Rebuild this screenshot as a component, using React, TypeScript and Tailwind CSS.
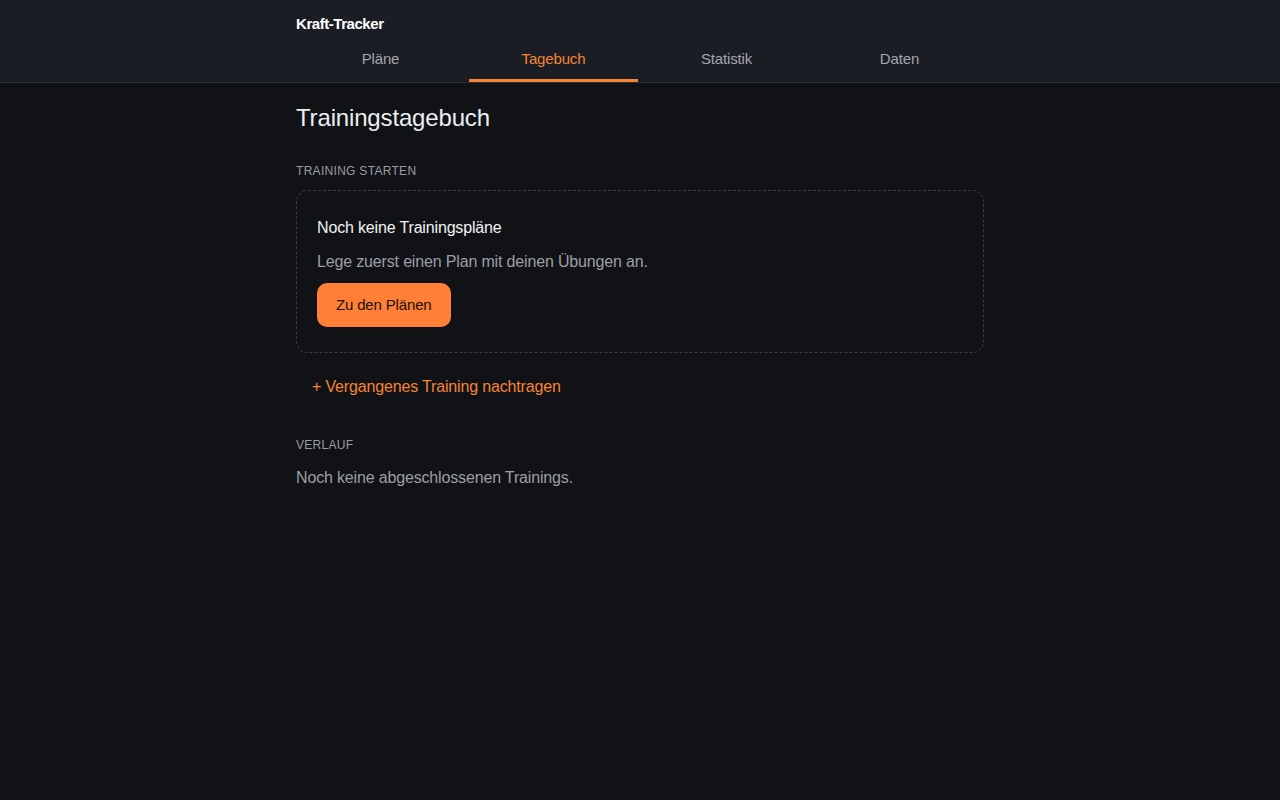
import React from "react";

const tabs = ["Pläne", "Tagebuch", "Statistik", "Daten"];

export default function App() {
  const active = "Tagebuch";
  return (
    <div
      className="min-h-screen bg-[#111216] text-[#e6e7ea]"
      style={{ fontFamily: '"Liberation Sans", Arial, sans-serif' }}
    >
      <header className="bg-[#1a1d24] border-b border-[#2c2f37]">
        <div className="mx-auto max-w-[720px] px-4">
          <div className="pt-[15px] pb-[6px] text-[15px] font-bold tracking-[-0.03em] text-white leading-[18px]">
            Kraft-Tracker
          </div>
          <nav className="grid grid-cols-4 gap-1">
            {tabs.map((t) => (
              <button
                key={t}
                className={
                  t === active
                    ? "h-[43px] text-[15px] tracking-[-0.01em] text-[#f58434] border-b-[3px] border-[#f58434]"
                    : "h-[43px] text-[15px] tracking-[-0.01em] text-[#a3a6ad] border-b-[3px] border-transparent"
                }
              >
                {t}
              </button>
            ))}
          </nav>
        </div>
      </header>

      <main className="mx-auto max-w-[720px] px-4 pt-[21px] tracking-[-0.01em]">
        <h1 className="text-[24px] leading-[28px] text-[#eceef1]">Trainingstagebuch</h1>

        <h2 className="mt-[30px] text-[12px] uppercase tracking-[0.025em] text-[#9a9ca3]">
          Training starten
        </h2>

        <div className="mt-[10px] rounded-[12px] border border-dashed border-[#3a3d45] px-5 pt-[27px] pb-[25px]">
          <div className="text-[16px] leading-[20px] text-[#f1f2f4]">Noch keine Trainingspläne</div>
          <p className="mt-[14px] text-[16px] leading-[20px] text-[#9c9fa6]">
            Lege zuerst einen Plan mit deinen Übungen an.
          </p>
          <button className="mt-[11px] h-[44px] rounded-[10px] bg-[#ff7f36] px-[19px] text-[15px] text-[#1b1208]">
            Zu den Plänen
          </button>
        </div>

        <button className="mt-[14px] h-[40px] px-4 text-[16px] text-[#f58434]">
          + Vergangenes Training nachtragen
        </button>

        <h2 className="mt-[29px] text-[12px] uppercase tracking-[0.025em] text-[#9a9ca3]">
          Verlauf
        </h2>
        <p className="mt-[12px] text-[16px] text-[#9c9fa6]">Noch keine abgeschlossenen Trainings.</p>
      </main>
    </div>
  );
}
